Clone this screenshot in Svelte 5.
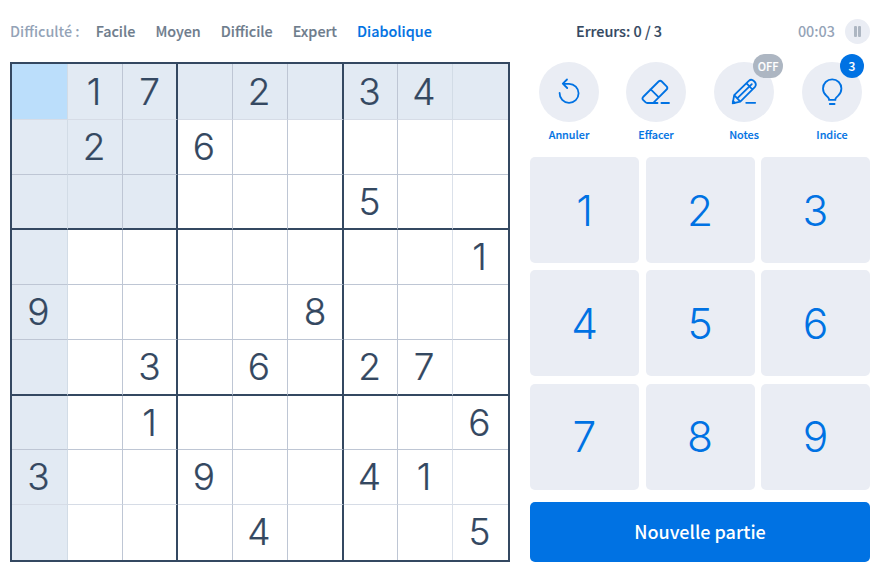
<script>
  const levels = ['Facile', 'Moyen', 'Difficile', 'Expert', 'Diabolique'];
  const rows = [
    '.17.2.34.',
    '.2.6.....',
    '......5..',
    '........1',
    '9....8...',
    '..3.6.27.',
    '..1.....6',
    '3..9..41.',
    '....4...5'
  ];
  const cells = rows.flatMap((row, r) => [...row].map((value, c) => ({ value, r, c })));
  const digits = [1, 2, 3, 4, 5, 6, 7, 8, 9];
</script>

<div class="game">
  <section class="left">
    <nav>
      <span class="label">Difficulté :</span>
      {#each levels as level, i}
        <span class="level" class:current={i === 4}>{level}</span>
      {/each}
    </nav>
    <div class="board">
      {#each cells as { value, r, c }}
        <div
          class="cell"
          class:peer={r === 0 || c === 0 || (r < 3 && c < 3)}
          class:selected={r === 0 && c === 0}
          class:thick-right={c === 2 || c === 5}
          class:thick-bottom={r === 2 || r === 5}
          class:soft-right={c === 0 || c === 7}
          class:soft-bottom={r === 0 || r === 7}
          class:last-col={c === 8}
          class:last-row={r === 8}
        >{value === '.' ? '' : value}</div>
      {/each}
    </div>
  </section>

  <section class="right">
    <header>
      <span class="errors">Erreurs: 0 / 3</span>
      <span class="time">00:03</span>
      <span class="pause"><i></i><i></i></span>
    </header>
    <div class="tools">
      <div class="tool">
        <div class="circle">
          <svg width="60" height="60" viewBox="0 0 60 60">
            <path d="M20.6 31A9.5 9.5 0 1 0 30 21.8H24.5M28 17.5L23.8 21.6L28.2 26" />
          </svg>
        </div>
        <span>Annuler</span>
      </div>
      <div class="tool">
        <div class="circle">
          <svg width="60" height="60" viewBox="0 0 60 60">
            <path d="M31.5 41H21.3Q20.2 41 19.4 40.2L17.1 37.9Q15.8 36.4 17.1 35L32.6 19.5Q34.2 17.9 35.8 19.5L40.6 24.3Q42.2 25.9 40.6 27.5L27.3 40.8M24.5 27.2L32.8 35.4M35.4 41H43" />
          </svg>
        </div>
        <span>Effacer</span>
      </div>
      <div class="tool">
        <div class="circle">
          <svg width="60" height="60" viewBox="0 0 60 60">
            <path d="M18.7 41.3L20.2 33.2L34.8 18.8Q37.3 16.5 39.9 19Q43.3 22.1 40.8 25.1L26.3 39.6L18.7 41.3ZM20.2 33.2L26.3 39.6M23.2 36.4L37.8 22.1M32.4 21.2L38.4 27.5M18.8 39L21 41M32.2 40.8H41.2" />
          </svg>
          <b class="badge off">OFF</b>
        </div>
        <span>Notes</span>
      </div>
      <div class="tool">
        <div class="circle">
          <svg width="60" height="60" viewBox="0 0 60 60">
            <path d="M27 37.9V36.8Q26.4 35.5 24.4 33.8Q21 30.8 21 26.5A9 9 0 0 1 39.4 26.5Q39.4 30.8 36 33.8Q34 35.5 33.4 36.8V37.9ZM27.8 42H32.6" />
          </svg>
          <b class="badge count">3</b>
        </div>
        <span>Indice</span>
      </div>
    </div>
    <div class="keypad">
      {#each digits as n}<div class="key">{n}</div>{/each}
    </div>
    <div class="new">Nouvelle partie</div>
  </section>
</div>

<style>
  :global(body) { background: #fff; }
  .game {
    box-sizing: border-box;
    width: 883px;
    height: 579px;
    display: flex;
    gap: 20px;
    padding: 0 13px 0 10px;
    font-family: 'Noto Sans CJK SC', 'Noto Sans CJK JP', sans-serif;
    font-weight: 500;
    color: #344861;
    overflow: hidden;
  }
  .left { width: 500px; }
  nav {
    height: 62px;
    display: flex;
    align-items: center;
    gap: 20px;
    font-size: 14.35px;
    line-height: 20px;
    white-space: nowrap;
  }
  .label { color: #94a3b7; margin-right: -4px; }
  .level { color: #6e7c8c; -webkit-text-stroke: 0.15px; }
  .current { color: #0072e3; }
  .board {
    box-sizing: border-box;
    width: 500px;
    height: 500px;
    border: 2px solid #344861;
    display: grid;
    grid-template-columns: 56px 55px 55px 55px 55px 56px 54px 55px 55px;
    grid-template-rows: 56px 55px 55px 55px 55px 56px 54px 55px 55px;
  }
  .cell {
    box-sizing: border-box;
    border-right: 1px solid #bec6d4;
    border-bottom: 1px solid #bec6d4;
    display: flex;
    align-items: center;
    justify-content: center;
    padding-right: 2px;
    font: 300 37px/54px Inter, sans-serif;
    -webkit-text-stroke: 0.2px;
  }
  .peer { background: #e2eaf3; }
  .selected { background: #bbdefb; }
  .soft-right { border-right-color: #dbe1ea; }
  .peer.soft-right { border-right-color: #d2dce6; }
  .soft-bottom { border-bottom-color: #d6dce6; }
  .thick-right { border-right: 2px solid #344861; padding-right: 0; }
  .thick-bottom { border-bottom: 2px solid #344861; }
  .last-col { border-right: 0; }
  .last-row { border-bottom: 0; padding-bottom: 1px; }

  .right { width: 340px; }
  header {
    height: 62px;
    display: flex;
    align-items: center;
    font-size: 14.4px;
    line-height: 20px;
    white-space: nowrap;
  }
  .errors { margin-left: 46px; -webkit-text-stroke: 0.15px; }
  .time { margin-left: auto; color: #94a3b7; }
  .pause {
    width: 25px;
    height: 25px;
    margin-left: 10px;
    border-radius: 50%;
    background: #eaedf4;
    display: flex;
    align-items: center;
    justify-content: center;
    gap: 1px;
  }
  .pause i { width: 3px; height: 11px; border-radius: 1px; background: #adb6c2; }
  .tools {
    display: flex;
    justify-content: space-between;
    height: 95px;
    padding: 0 8px 0 9px;
    box-sizing: border-box;
  }
  .tool {
    width: 60px;
    display: flex;
    flex-direction: column;
    align-items: center;
    color: #0072e3;
    font-size: 10.8px;
    line-height: 16px;
    gap: 4px;
    -webkit-text-stroke: 0.15px;
  }
  .tool:nth-child(2) { margin-left: -1px; }
  .circle {
    position: relative;
    width: 60px;
    height: 60px;
    border-radius: 50%;
    background: #eaedf4;
  }
  svg {
    display: block;
    fill: none;
    stroke: #0072e3;
    stroke-width: 1.8;
    stroke-linecap: round;
    stroke-linejoin: round;
  }
  .badge {
    position: absolute;
    top: -8px;
    height: 24px;
    border-radius: 12px;
    color: #fff;
    text-align: center;
    line-height: 24px;
    font-size: 11px;
    font-weight: 500;
  }
  .off { left: 39px; width: 30px; background: #adb6c2; }
  .count { left: 38px; width: 24px; background: #0072e3; font-size: 12px; }
  .keypad {
    display: grid;
    grid-template-columns: repeat(3, 109px);
    grid-template-rows: repeat(3, 106px);
    justify-content: space-between;
    row-gap: 7.4px;
  }
  .key {
    border-radius: 5px;
    background: #eaedf4;
    color: #0072e3;
    display: flex;
    align-items: center;
    justify-content: center;
    font: 300 42.5px/106px Inter, sans-serif;
    padding-top: 1px;
    box-sizing: border-box;
  }
  .new {
    height: 60px;
    margin-top: 12.2px;
    border-radius: 5px;
    background: #0072e3;
    color: #fff;
    text-align: center;
    font-size: 18px;
    line-height: 59px;
  }
</style>
